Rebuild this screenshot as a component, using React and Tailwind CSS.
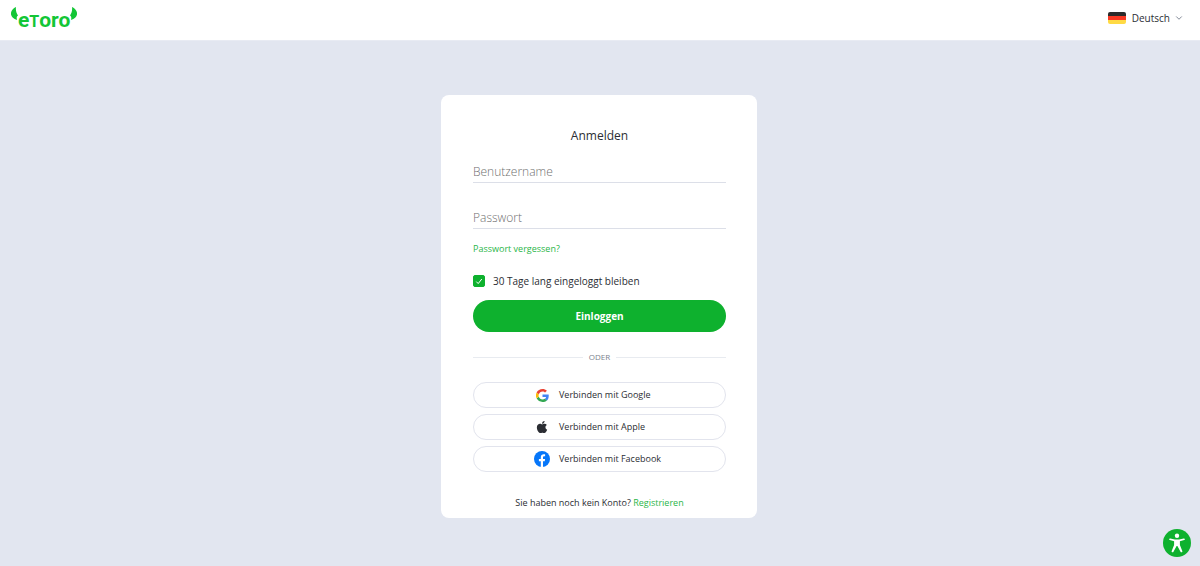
import { ChevronDown } from 'lucide-react';
import { FaApple } from 'react-icons/fa';

function Logo() {
  return (
    <a href="#" aria-label="eToro" className="flex items-start text-[#13c636]">
      <svg viewBox="0 0 14 26" className="w-[7px] h-[13px]" fill="currentColor" aria-hidden="true">
        <path d="M10 0C3 3 -1 9 0 15C1 20 5 24 12 26C11 22 11 19 14 17C11 13 9 7 10 0Z" />
      </svg>
      <span className="pt-[5px] flex items-baseline font-['Roboto',sans-serif] text-[21px] leading-4 font-bold">
        e<span className="text-[16px]">T</span>oro
      </span>
      <svg viewBox="0 0 14 26" className="w-[7px] h-[13px]" fill="currentColor" aria-hidden="true">
        <path d="M4 0C11 3 15 9 14 15C13 20 9 24 2 26C3 22 3 19 0 17C3 13 5 7 4 0Z" />
      </svg>
    </a>
  );
}

function LanguagePicker() {
  return (
    <div className="relative flex items-center gap-1.5">
      <svg viewBox="0 0 18 12" className="w-[18px] h-3 rounded-xs" aria-hidden="true">
        <path fill="#2b2b2b" d="M0 0h18v4H0z" />
        <path fill="#f93822" d="M0 4h18v4H0z" />
        <path fill="#ffda44" d="M0 8h18v4H0z" />
      </svg>
      <select aria-label="Sprache" className="appearance-none field-sizing-content h-5 pr-3.5 text-[10px] leading-5 bg-transparent">
        <option>Deutsch</option>
      </select>
      <ChevronDown className="absolute right-0 w-2.5 h-2.5 text-gray-500 pointer-events-none" />
    </div>
  );
}

function Field({ label, type = 'text' }) {
  return (
    <input
      type={type}
      aria-label={label}
      placeholder={label}
      className="block w-full h-[22px] border-b border-[#dcdfe8] text-[12px] leading-5 font-light placeholder:text-[#6f6f6f] outline-none"
    />
  );
}

function GoogleIcon() {
  return (
    <svg viewBox="0 0 24 24" className="w-[13px] h-[13px]" aria-hidden="true">
      <path fill="#4285f4" d="M23.5 12.3c0-.9-.1-1.5-.2-2.2H12v4.500h6.600c-.1 1.100-.9 2.800-2.500 3.900l3.900 3c2.200-2 3.500-5.200 3.500-9.200Z" />
      <path fill="#34a853" d="M12 24c3.200 0 6-1.100 8-2.900l-3.900-3c-1 .7-2.400 1.200-4.100 1.200-3.200 0-5.800-2.100-6.800-5L1.200 17.300C3.200 21.300 7.300 24 12 24Z" />
      <path fill="#fbbc05" d="M5.200 14.300a7.400 7.400 0 0 1 0-4.700L1.200 6.600a12 12 0 0 0 0 10.700Z" />
      <path fill="#ea4335" d="M12 4.600c2.300 0 3.800 1 4.700 1.800l3.400-3.300C18 1.200 15.200 0 12 0 7.300 0 3.200 2.700 1.200 6.600l4 3.100c1-3 3.600-5.100 6.800-5.100Z" />
    </svg>
  );
}

function FacebookIcon() {
  return (
    <svg viewBox="0 0 16 16" className="w-4 h-4" aria-hidden="true">
      <circle cx="8" cy="8" r="8" fill="#0676f9" />
      <path fill="#fff" d="M6.8 16V10.3H4.9V8h1.9V6.4c0-2.1 1.2-3.2 3-3.2.7 0 1.3.1 1.3.1v2h-.9c-1 0-1.2.6-1.2 1.2V8h2.1l-.4 2.3H9V16z" />
    </svg>
  );
}

function SocialButton({ icon, children }) {
  return (
    <button type="button" className="w-full h-[26px] pl-[60px] flex items-center gap-[9px] rounded-full border border-[#e2e4ed] text-[9px] leading-4">
      <span className="w-4 flex justify-center">{icon}</span>
      {children}
    </button>
  );
}

export default function App() {
  return (
    <div className="min-h-screen flex flex-col bg-[#e2e6f0] font-['Open_Sans',sans-serif] text-[#2b2d33]">
      <header className="h-[41px] pl-[11px] pr-4 pb-1 flex items-center justify-between bg-white border-b border-[#e8ebf3]">
        <Logo />
        <LanguagePicker />
      </header>

      <main className="flex-1 pt-[54px] pb-12 pl-4 pr-4.5">
        <form onSubmit={(e) => e.preventDefault()} className="w-full max-w-[316px] mx-auto pl-8 pr-[31px] pt-[31px] pb-[7px] bg-white rounded-lg">
          <h1 className="text-[12px] leading-5 text-center">Anmelden</h1>

          <div className="pt-[15px] flex flex-col gap-6">
            <Field label="Benutzername" />
            <Field label="Passwort" type="password" />
          </div>

          <a href="#" className="block mt-3 text-[9px] leading-4 text-[#2ab648]">Passwort vergessen?</a>

          <div className="mt-4 flex items-center gap-2">
            <span className="relative flex">
              <input
                id="remember"
                type="checkbox"
                defaultChecked
                className="peer appearance-none w-3 h-3 rounded-xs border border-[#0eb12e] checked:bg-[#0eb12e]"
              />
              <svg viewBox="0 0 12 12" className="absolute inset-0 w-3 h-3 hidden peer-checked:block pointer-events-none" fill="none" stroke="#fff" aria-hidden="true">
                <path d="M3.3 6.6 5.2 8.6 8.8 4" />
              </svg>
            </span>
            <label htmlFor="remember" className="text-[10px] leading-4">30 Tage lang eingeloggt bleiben</label>
          </div>

          <button type="submit" className="mt-[11px] w-full h-8 rounded-full bg-[#0eb12e] text-white text-[10px] font-bold">
            Einloggen
          </button>

          <div className="my-[17px] flex items-center gap-1.5 text-[8px] leading-4 text-[#7b828e]">
            <span className="flex-1 border-t border-[#e8ebf0]" />
            ODER
            <span className="flex-1 border-t border-[#e8ebf0]" />
          </div>

          <div className="flex flex-col gap-1.5">
            <SocialButton icon={<GoogleIcon />}>Verbinden mit Google</SocialButton>
            <SocialButton icon={<FaApple className="w-3.5 h-3.5" />}>Verbinden mit Apple</SocialButton>
            <SocialButton icon={<FacebookIcon />}>Verbinden mit Facebook</SocialButton>
          </div>

          <p className="mt-[23px] text-[9px] leading-4 text-center">
            Sie haben noch kein Konto? <a href="#" className="text-[#2ab648]">Registrieren</a>
          </p>
        </form>
      </main>

      <button type="button" aria-label="Barrierefreiheit" className="fixed right-[9px] bottom-[9px] w-7 h-7 rounded-full bg-[#0eb12e]">
        <svg viewBox="0 0 28 28" fill="#fff" aria-hidden="true">
          <circle cx="14" cy="6.8" r="2.2" />
          <path d="M7.2 9.4 12 10.4h4l4.8-1c1.2-.2 1.5 1.4.4 1.7l-4.3 1.2v3.6l2.4 6c.5 1.2-1.2 1.9-1.8.8L14.4 17h-.8l-3.1 5.7c-.6 1.1-2.3.4-1.8-.8l2.4-6v-3.6L6.8 11.1c-1.1-.3-.8-1.9.4-1.7Z" />
        </svg>
      </button>
    </div>
  );
}
